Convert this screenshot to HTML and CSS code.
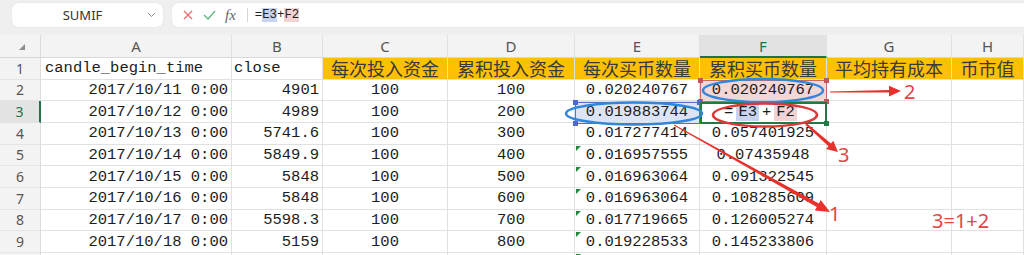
FILE: index.html
```html
<!DOCTYPE html>
<html lang="zh-CN">
<head>
	<meta charset="UTF-8">
	<title>SUMIF 累积买币数量</title>
	<link rel="stylesheet" href="styles.css">
</head>
<body>
<div class="page">
	<div class="toolbar">
		<div class="namebox">
			<span class="name">SUMIF</span>
			<svg class="chev" width="9" height="6" viewBox="0 0 9 6"><polyline points="1,1 4.5,4.5 8,1" fill="none" stroke="#8a8a8a" stroke-width="1"/></svg>
		</div>
		<div class="formula">
			<svg class="ico-x" width="10" height="10" viewBox="0 0 10 10"><path d="M1 1L9 9M9 1L1 9" stroke="#e07272" stroke-width="1.4" fill="none"/></svg>
			<svg class="ico-ok" width="13" height="10" viewBox="0 0 13 10"><polyline points="1,5 5,9 12,1" stroke="#62b886" stroke-width="1.4" fill="none"/></svg>
			<span class="fx">fx</span>
			<span class="sep"></span>
			<span class="ftext">=<span class="ref-e">E3</span>+<span class="ref-f">F2</span></span>
		</div>
	</div>

	<div class="sheet">
		<div class="corner"><i></i></div>
		<div class="ch">A</div><div class="ch">B</div><div class="ch">C</div><div class="ch">D</div>
		<div class="ch">E</div><div class="ch on">F</div><div class="ch">G</div><div class="ch">H</div>

		<div class="rh">1</div>
		<div class="c l">candle_begin_time</div><div class="c l2">close</div>
		<div class="c cn">每次投入资金</div><div class="c cn">累积投入资金</div><div class="c cn">每次买币数量</div>
		<div class="c cn">累积买币数量</div><div class="c cn">平均持有成本</div><div class="c cn">币市值</div>

		<div class="rh">2</div>
		<div class="c r">2017/10/11 0:00</div><div class="c r">4901</div><div class="c m">100</div><div class="c m">100</div>
		<div class="c m">0.020240767</div><div class="c m pick-f">0.020240767</div><div class="c"></div><div class="c"></div>

		<div class="rh on">3</div>
		<div class="c r">2017/10/12 0:00</div><div class="c r">4989</div><div class="c m">100</div><div class="c m">200</div>
		<div class="c m pick-e">0.019883744</div>
		<div class="c m edit">=<span class="ref-e">E3</span>+<span class="ref-f">F2</span></div>
		<div class="c"></div><div class="c"></div>

		<div class="rh">4</div>
		<div class="c r">2017/10/13 0:00</div><div class="c r">5741.6</div><div class="c m">100</div><div class="c m">300</div>
		<div class="c m">0.017277414</div><div class="c m">0.057401925</div><div class="c"></div><div class="c"></div>

		<div class="rh">5</div>
		<div class="c r">2017/10/14 0:00</div><div class="c r">5849.9</div><div class="c m">100</div><div class="c m">400</div>
		<div class="c m txt">0.016957555</div><div class="c m">0.07435948</div><div class="c"></div><div class="c"></div>

		<div class="rh">6</div>
		<div class="c r">2017/10/15 0:00</div><div class="c r">5848</div><div class="c m">100</div><div class="c m">500</div>
		<div class="c m txt">0.016963064</div><div class="c m">0.091322545</div><div class="c"></div><div class="c"></div>

		<div class="rh">7</div>
		<div class="c r">2017/10/16 0:00</div><div class="c r">5848</div><div class="c m">100</div><div class="c m">600</div>
		<div class="c m txt">0.016963064</div><div class="c m">0.108285609</div><div class="c"></div><div class="c"></div>

		<div class="rh">8</div>
		<div class="c r">2017/10/17 0:00</div><div class="c r">5598.3</div><div class="c m">100</div><div class="c m">700</div>
		<div class="c m txt">0.017719665</div><div class="c m">0.126005274</div><div class="c"></div><div class="c"></div>

		<div class="rh">9</div>
		<div class="c r">2017/10/18 0:00</div><div class="c r">5159</div><div class="c m">100</div><div class="c m">800</div>
		<div class="c m txt">0.019228533</div><div class="c m">0.145233806</div><div class="c"></div><div class="c"></div>

		<div class="rh"></div>
		<div class="c"></div><div class="c"></div><div class="c"></div><div class="c"></div>
		<div class="c txt"></div><div class="c"></div><div class="c"></div><div class="c"></div>
	</div>

	<!-- 批注：圈和箭头 -->
	<svg class="marks" width="1024" height="255" viewBox="0 0 1024 255">
		<rect x="700.5" y="80.5" width="126" height="21" fill="none" stroke="#c56b6b"/>
		<rect x="698" y="78" width="5" height="5" fill="#b95a5c"/><rect x="824" y="78" width="5" height="5" fill="#b95a5c"/>
		<rect x="698" y="99" width="5" height="5" fill="#b95a5c"/><rect x="824" y="99" width="5" height="5" fill="#b95a5c"/>

		<rect x="575.5" y="102.5" width="124" height="21" fill="none" stroke="#4d72cf"/>
		<rect x="573" y="100" width="5" height="5" fill="#4a6cd0"/><rect x="697" y="100" width="5" height="5" fill="#4a6cd0"/>
		<rect x="573" y="121" width="5" height="5" fill="#4a6cd0"/>

		<rect x="701" y="103" width="125" height="20" fill="none" stroke="#1f7a46" stroke-width="2"/>
		<rect x="824" y="121" width="5" height="5" fill="#1f7a46"/>

		<ellipse cx="763" cy="90.5" rx="60" ry="11.5" fill="none" stroke="#2f86dc" stroke-width="2.5"/>
		<ellipse cx="634" cy="113.5" rx="68" ry="11" fill="none" stroke="#2f86dc" stroke-width="2.5"/>
		<ellipse cx="765" cy="115" rx="52" ry="11.5" fill="none" stroke="#dd3838" stroke-width="2.5"/>

		<polygon fill="#e8312c" points="830,91.4 889,90.1 889,85.8 901,91 889,96.6 889,92.4 830,92.6"/>
		<polygon fill="#e8312c" points="806.7,123.3 830.9,143.4 833.3,140.7 838,152 826.1,148.9 828.5,146.2 805.3,124.8"/>
		<polygon fill="#e8312c" points="674.2,124.6 818.8,203.5 820.7,200 830,212 814.9,210.4 816.8,207 673.8,125.4"/>

		<text class="note" x="904" y="99">2</text>
		<text class="note" x="838" y="162">3</text>
		<text class="note" x="829" y="221">1</text>
		<text class="note" x="932" y="228">3=1+2</text>
	</svg>
</div>
</body>
</html>
```

FILE: styles.css
```css
body{
	margin: 0;background: #fff;
	font-family: "Noto Sans","Liberation Sans",sans-serif;
}
.page{
	position: relative;width: 1024px;height: 255px;overflow: hidden;
}
.toolbar{
	height: 35px;background: #efefef;display: flex;align-items: flex-start;
	padding: 3px 0 0 12px;box-sizing: border-box;gap: 9px;
}
.namebox{
	width: 151px;height: 24px;background: #fff;border-radius: 6px;
	box-shadow: 0 0 1px rgba(0,0,0,.2);display: flex;align-items: center;padding-right: 7px;box-sizing: border-box;
}
.name{
	flex: 1;text-align: center;font-size: 13px;color: #333;padding-left: 6px;
}
.formula{
	flex: 1;height: 24px;background: #fff;border-radius: 6px 0 0 6px;
	box-shadow: 0 0 1px rgba(0,0,0,.2);display: flex;align-items: center;padding-left: 11px;
}
.ico-ok{
	margin-left: 10px;
}
.fx{
	margin-left: 9px;font: italic 15px "Liberation Serif",serif;color: #666;
}
.sep{
	width: 1px;height: 14px;background: #d6d6d6;margin: 0 7px 0 11px;
}
.ftext{
	font: 12.3px "Liberation Mono",monospace;color: #222;
}
.ftext .ref-e{ background: #c8d4ef; }
.ftext .ref-f{ background: #f1d3d3; }

.sheet{
	display: grid;
	grid-template-columns: 41px 191px 91px 125px 127px 125px 127px 125px 72px;
	grid-template-rows: 23px repeat(10, 21.67px);
}
.corner,.ch,.rh{
	background: #f3f3f3;color: #555;box-sizing: border-box;
	display: flex;align-items: center;justify-content: center;
}
.corner{
	border-right: 1px solid #dcdcdc;border-bottom: 1px solid #d8d8d8;
}
.corner i{
	width: 0;height: 0;margin: 2px 0 0 3px;
	border-left: 6px solid transparent;border-bottom: 6px solid #8c8c8c;
}
.ch{
	font-size: 15px;border-right: 1px solid #e0e0e0;border-bottom: 1px solid #d8d8d8;
}
.ch.on{
	background: #e2e2e2;border-bottom: 2px solid #217346;color: #217346;
}
.rh{
	font-size: 14px;border-right: 1px solid #dcdcdc;border-bottom: 1px solid #e4e4e4;
}
.rh.on{
	background: #e3e3e3;border-right: 2px solid #217346;color: #217346;
}
.c{
	position: relative;box-sizing: border-box;
	border-right: 1px solid #e1e1e1;border-bottom: 1px solid #e1e1e1;
	display: flex;align-items: center;white-space: nowrap;
	font: 15.5px "Liberation Mono",monospace;color: #1c1c1c;
}
.r{ justify-content: flex-end;padding-right: 3px; }
.m{ justify-content: center; }
.l{ padding-left: 4px; }
.l2{ padding-left: 2px; }
.cn{
	background: #ffc000;justify-content: center;line-height: 1;
	font: 18px "Noto Sans CJK SC",sans-serif;color: #3a3a3a;
}
.pick-f{ background: #f3d6d6; }
.pick-e{ background: #dde4f5; }
.edit .ref-e{ background: #c8d4ef;padding: 0 2px;margin: 0 3px; }
.edit .ref-f{ background: #f1d3d3;padding: 0 2px;margin: 0 3px; }
.edit{ padding-right: 2px; }
.txt::before{
	content: "";position: absolute;left: 1px;top: 1px;width: 0;height: 0;
	border-top: 5px solid #1e8a3a;border-right: 5px solid transparent;
}
.marks{
	position: absolute;left: 0;top: 0;pointer-events: none;
}
.note{
	font-family: "Noto Sans","Liberation Sans",sans-serif;font-size: 20px;fill: #e24545;
}
```
